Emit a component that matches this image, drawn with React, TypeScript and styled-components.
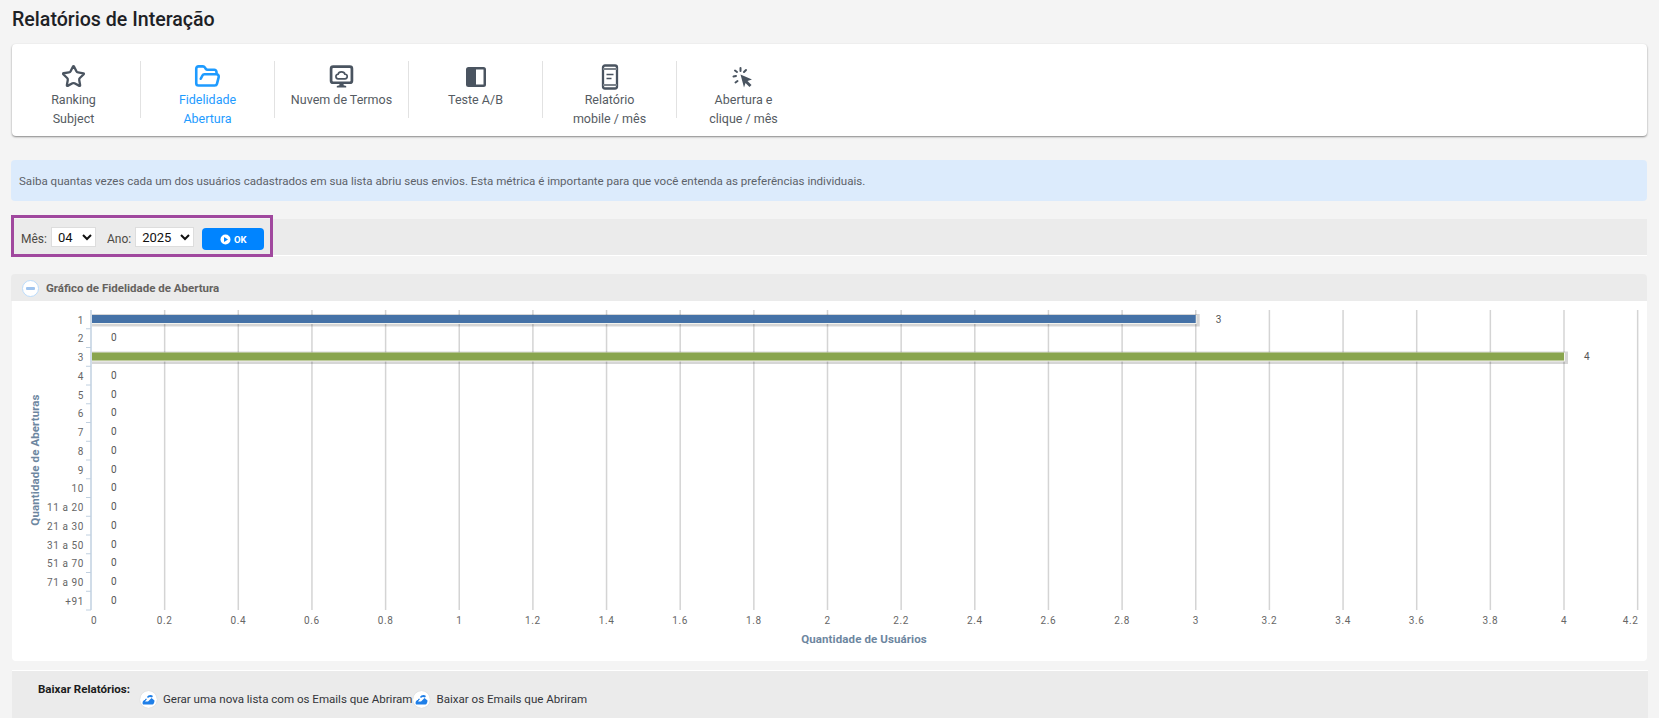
import React from 'react';
import styled, { createGlobalStyle } from 'styled-components';
import { FolderOpen, Star } from 'lucide-react';

const GlobalStyle = createGlobalStyle`
    html, body {
        margin: 0;
        padding: 0;
        height: 718px;
        overflow: hidden;
        background: #f4f4f4;
        font-family: Roboto, "Liberation Sans", sans-serif;
    }
`;

const Page = styled.div`
    width: 1647px;
    padding-left: 12px;
    box-sizing: border-box;
`;

const Title = styled.h1`
    margin: 0;
    padding-top: 7px;
    height: 44px;
    box-sizing: border-box;
    font-size: 19.6px;
    line-height: 26px;
    font-weight: 500;
    color: #1d2125;
`;

const NavCard = styled.div`
    height: 92px;
    background: #fff;
    border-radius: 4px;
    box-shadow: 0 1px 2px rgba(0, 0, 0, 0.45);
    display: flex;
    padding-top: 17px;
    box-sizing: border-box;
`;

const NavItem = styled.div<{ $active?: boolean; $first?: boolean; $last?: boolean }>`
    width: ${(p) => (p.$first ? 129 : 134)}px;
    height: 57px;
    padding-right: ${(p) => (p.$first ? 5 : 0)}px;
    display: flex;
    flex-direction: column;
    align-items: center;
    box-sizing: border-box;
    border-right: 1px solid ${(p) => (p.$last ? 'transparent' : '#e2e2e2')};
    color: ${(p) => (p.$active ? '#1e9bff' : '#555b62')};
    font-size: 12.5px;
    line-height: 19px;
    text-align: center;
`;

const NavIcon = styled.div`
    flex: 0 0 29px;
    padding-top: 2px;
    box-sizing: border-box;
    display: flex;
    align-items: center;
    justify-content: center;
`;

const InfoBox = styled.div`
    margin-top: 24px;
    height: 41px;
    margin-left: -1px;
    padding-left: 8px;
    display: flex;
    align-items: center;
    border-radius: 4px;
    background: #dcebfc;
    color: #5d6269;
    font-size: 11.55px;
`;

const FilterBar = styled.div`
    margin-top: 18px;
    height: 36px;
    margin-left: -1px;
    background: #ebebeb;
    border-bottom: 1px solid #fff;
    display: flex;
`;

const FilterBox = styled.form`
    margin-top: -4px;
    width: 262px;
    height: 42px;
    box-sizing: border-box;
    border: 3px solid #a0489e;
    display: flex;
    align-items: flex-start;
    padding: 9px 0 0 7px;
    font-size: 12px;
    color: #4d4a44;
`;

const FilterLabel = styled.label`
    margin: 3px 4px 0 0;
    line-height: 18px;
`;

const Select = styled.select<{ $width: number }>`
    width: ${(p) => p.$width}px;
    height: 20px;
    margin-right: 11px;
    padding: 0 0 0 2px;
    border: 1px solid #ddd;
    background: #fff;
    color: #111;
    font-family: Roboto, sans-serif;
    font-size: 13px;
`;

const OkButton = styled.button`
    margin: 1px 0 0 -3px;
    width: 62px;
    height: 22px;
    border: 0;
    border-radius: 4px;
    background: #0084ff;
    color: #fff;
    font-family: Roboto, sans-serif;
    font-size: 9.5px;
    font-weight: 700;
    display: flex;
    align-items: center;
    justify-content: center;
    gap: 3px;
`;

const PanelHeader = styled.div`
    margin-top: 18px;
    height: 27px;
    margin-left: -1px;
    background: #ebebeb;
    border-radius: 4px 4px 0 0;
    display: flex;
    align-items: center;
    padding-left: 11px;
    box-sizing: border-box;
    gap: 7px;
    color: #65625e;
    font-size: 11.5px;
    font-weight: 700;
`;

const CollapseIcon = styled.span`
    width: 17px;
    height: 17px;
    box-sizing: border-box;
    margin-top: 1px;
    border-radius: 50%;
    background: #fff;
    border: 1px solid #bcdcfb;
    display: flex;
    align-items: center;
    justify-content: center;

    &::after {
        content: '';
        width: 9px;
        height: 3px;
        border-radius: 1px;
        background: #9fc4ef;
    }
`;

const ChartCard = styled.div`
    height: 360px;
    background: #fff;
    border-radius: 0 0 4px 4px;
`;

const DownloadBar = styled.div`
    margin-top: 9px;
    width: 1636px;
    height: 60px;
    background: #ebebeb;
    border-top: 1px solid #fff;
    display: flex;
    align-items: flex-start;
    padding: 10px 0 0 26px;
    box-sizing: border-box;
    font-size: 11.55px;
    color: #33353a;
`;

const DownloadLabel = styled.strong`
    font-weight: 700;
    color: #1c1c1c;
    margin-right: 10px;
    line-height: 16px;
`;

const DownloadLink = styled.a`
    margin: 9px 1px 0 0;
    display: flex;
    align-items: center;
    gap: 6px;
    line-height: 18px;
`;

const DownloadIcon = styled.span`
    width: 17px;
    height: 17px;
    border-radius: 50%;
    background: #fff;
    box-shadow: 0 0 1px rgba(0, 0, 0, 0.2);
    display: flex;
    align-items: center;
    justify-content: center;
`;

const CloudArrow = () => (
    <svg width="13" height="11" viewBox="0 0 13 11">
        <path d="M1 10.500c-1-2 0-4.500 2-4.500 0-1 1-1.500 2-1l-2 2.500h3l3.500-3.500 3 2.500c0 2-1 4-2 4z" fill="#1f7fe8" />
        <path d="M5 3c1-2 4-3 6-1l-1 1.500C8 2.500 7 3 6 4z" fill="#1f7fe8" />
    </svg>
);

const MonitorCloud = () => (
    <svg width="25" height="25" viewBox="0 0 24 24" fill="none">
        <rect x="2" y="2.500" width="20" height="15.500" rx="2" stroke="#4a5460" strokeWidth="2.600" />
        <path d="M7.500 22.500h9v-1.500l-2.500-.5V18h-4v2.500l-2.500.5z" fill="#4a5460" />
        <path d="M9 14.200a2.200 2.200 0 0 1-.3-4.400c.6-2.800 5.800-3 6.600 0a2.200 2.200 0 0 1 0 4.400z" stroke="#4a5460" strokeWidth="1.600" />
    </svg>
);

const SplitSquare = () => (
    <svg width="24" height="24" viewBox="0 0 24 24">
        <rect x="2" y="2" width="20" height="20" rx="2.500" fill="#4a5460" />
        <rect x="12" y="4.500" width="7.500" height="15" fill="#fff" />
    </svg>
);

const MobileReport = () => (
    <svg width="24" height="26" viewBox="0 0 24 26" fill="none">
        <rect x="5" y="1.500" width="14" height="23" rx="2" stroke="#4a5460" strokeWidth="2.300" />
        <path d="M5 5h14M5 21h14" stroke="#7c838b" strokeWidth="2" />
        <path d="M8.500 10.500h7M8.500 14.500h5" stroke="#4a5460" strokeWidth="1.600" />
    </svg>
);

const ClickBurst = () => (
    <svg width="24" height="24" viewBox="1.500 0 24 24" fill="none">
        <path d="M10 9.500l11.500 5-4.500 1.500 4 4-2 2-4-4-1.500 4.500z" fill="#4a5460" />
        <path d="M10 3v3M4.500 5.500l2 1.500M3 11.500l2.500-.5M15.500 5l-2 2M5 17.500l2-1.500" stroke="#4a5460" strokeWidth="2" strokeLinecap="round" />
    </svg>
);

const categories = ['1', '2', '3', '4', '5', '6', '7', '8', '9', '10', '11 a 20', '21 a 30', '31 a 50', '51 a 70', '71 a 90', '+91'];
const values = [3, 0, 4, 0, 0, 0, 0, 0, 0, 0, 0, 0, 0, 0, 0, 0];
const barColors: Record<number, string> = { 0: '#4572a7', 2: '#89a54e' };
const ticks = ['0', '0.2', '0.4', '0.6', '0.8', '1', '1.2', '1.4', '1.6', '1.8', '2', '2.2', '2.4', '2.6', '2.8', '3', '3.2', '3.4', '3.6', '3.8', '4', '4.2'];

// chart coordinates are relative to the card, which starts at x=12 y=301
const X0 = 79;
const UNIT = 368.25;
const TOP = 9;
const ROW = 18.75;
const BOTTOM = TOP + ROW * 16;

const Chart = () => (
    <svg width="1635" height="360" fontFamily="Roboto, sans-serif" fontSize="10" letterSpacing="0.600">
        {ticks.map((t) => (
            <line key={t} x1={X0 + Number(t) * UNIT} x2={X0 + Number(t) * UNIT} y1={TOP} y2={BOTTOM} stroke={Number(t) === 0 ? '#c0d0e0' : '#d4d4d4'} strokeWidth="1.500" />
        ))}
        {categories.map((c, i) => (
            <g key={c}>
                <line x1={X0 - 5} x2={X0} y1={TOP + ROW * (i + 1)} y2={TOP + ROW * (i + 1)} stroke="#c0d0e0" />
                <text x={X0 - 7} y={TOP + ROW * i + 13.500} textAnchor="end" fill="#666">{c}</text>
                {values[i] > 0 ? (
                    <>
                        <rect x={X0 + 1} y={TOP + ROW * i + 4} width={values[i] * UNIT + 3} height={12.500} fill="#000" opacity="0.16" />
                        <rect x={X0 + 1} y={TOP + ROW * i + 5} width={values[i] * UNIT} height={9} fill="#f4f4ee" />
                        <rect x={X0 + 1} y={TOP + ROW * i + 5} width={values[i] * UNIT - 1} height={8} fill={barColors[i]} />
                    </>
                ) : null}
                <text x={X0 + (values[i] > 0 ? values[i] * UNIT + 20 : 20)} y={TOP + ROW * i + 12.500} fill="#555">{values[i]}</text>
            </g>
        ))}
        {ticks.map((t) => (
            <text key={t} x={X0 + Number(t) * UNIT + (t === '0' ? 3 : 0) - (t === '4.2' ? 7 : 0)} y={BOTTOM + 14} textAnchor="middle" fill="#666">{t}</text>
        ))}
        <text x="852" y={BOTTOM + 32.500} textAnchor="middle" fill="#6d869f" fontWeight="700" fontSize="11.500" letterSpacing="0.100">Quantidade de Usuários</text>
        <text transform="translate(27 159) rotate(-90)" textAnchor="middle" fill="#6d869f" fontWeight="700" fontSize="11.500" letterSpacing="0.100">Quantidade de Aberturas</text>
    </svg>
);

function App() {
    return (
        <Page>
            <GlobalStyle />
            <Title>Relatórios de Interação</Title>
            <NavCard>
                <NavItem $first>
                    <NavIcon><Star size={25} strokeWidth={2.200} color="#4a5460" /></NavIcon>
                    <div>Ranking<br />Subject</div>
                </NavItem>
                <NavItem $active>
                    <NavIcon><FolderOpen size={27} strokeWidth={2.300} color="#1e9bff" /></NavIcon>
                    <div>Fidelidade<br />Abertura</div>
                </NavItem>
                <NavItem>
                    <NavIcon><MonitorCloud /></NavIcon>
                    <div>Nuvem de Termos</div>
                </NavItem>
                <NavItem>
                    <NavIcon><SplitSquare /></NavIcon>
                    <div>Teste A/B</div>
                </NavItem>
                <NavItem>
                    <NavIcon><MobileReport /></NavIcon>
                    <div>Relatório<br />mobile / mês</div>
                </NavItem>
                <NavItem $last>
                    <NavIcon><ClickBurst /></NavIcon>
                    <div>Abertura e<br />clique / mês</div>
                </NavItem>
            </NavCard>
            <InfoBox>Saiba quantas vezes cada um dos usuários cadastrados em sua lista abriu seus envios. Esta métrica é importante para que você entenda as preferências individuais.</InfoBox>
            <FilterBar>
                <FilterBox>
                    <FilterLabel>Mês:</FilterLabel>
                    <Select $width={45} defaultValue="04"><option>04</option></Select>
                    <FilterLabel>Ano:</FilterLabel>
                    <Select $width={59} defaultValue="2025"><option>2025</option></Select>
                    <OkButton type="button">
                        <svg width="11" height="11" viewBox="0 0 11 11">
                            <circle cx="5.500" cy="5.500" r="5" fill="#fff" />
                            <path d="M4 3l4 2.500L4 8z" fill="#0084ff" />
                        </svg>
                        OK
                    </OkButton>
                </FilterBox>
            </FilterBar>
            <PanelHeader><CollapseIcon />Gráfico de Fidelidade de Abertura</PanelHeader>
            <ChartCard><Chart /></ChartCard>
            <DownloadBar>
                <DownloadLabel>Baixar Relatórios:</DownloadLabel>
                <DownloadLink><DownloadIcon><CloudArrow /></DownloadIcon>Gerar uma nova lista com os Emails que Abriram</DownloadLink>
                <DownloadLink><DownloadIcon><CloudArrow /></DownloadIcon>Baixar os Emails que Abriram</DownloadLink>
            </DownloadBar>
        </Page>
    );
}

export default App;
